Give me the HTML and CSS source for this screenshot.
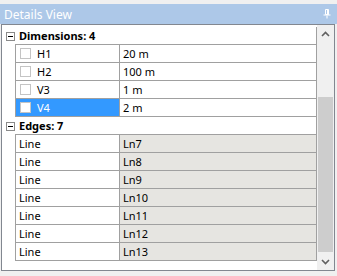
FILE: index.html
```html
<!DOCTYPE html>
<html lang="en">
<head>
<meta charset="UTF-8" />
<title>Details View</title>
<link rel="stylesheet" href="styles.css">
</head>
<body>

<div class="titlebar">
  <span>Details View</span>
  <svg class="pin" width="8" height="10" viewBox="0 0 8 10">
    <path d="M2.5 0.5h3v5h-3z" fill="none" stroke="#fff" />
    <rect x="4" y="1" width="1.5" height="4.5" fill="#fff" />
    <rect x="0.5" y="5.5" width="7" height="1" fill="#fff" />
    <rect x="3.5" y="6.5" width="1" height="3" fill="#fff" />
  </svg>
</div>

<div class="grid">
  <div class="rows">
    <div class="row cat">
      <div class="gutter"><span class="toggle"></span></div>
      <div class="label">Dimensions: 4</div>
    </div>
    <div class="row prop">
      <div class="gutter"></div>
      <div class="name"><span class="check"></span>H1</div>
      <div class="value">20 m</div>
    </div>
    <div class="row prop">
      <div class="gutter"></div>
      <div class="name"><span class="check"></span>H2</div>
      <div class="value">100 m</div>
    </div>
    <div class="row prop">
      <div class="gutter"></div>
      <div class="name"><span class="check"></span>V3</div>
      <div class="value">1 m</div>
    </div>
    <div class="row prop">
      <div class="gutter"></div>
      <div class="name selected"><span class="check"></span>V4</div>
      <div class="value">2 m</div>
    </div>

    <div class="row cat">
      <div class="gutter"><span class="toggle"></span></div>
      <div class="label">Edges: 7</div>
    </div>
    <div class="row prop">
      <div class="gutter"></div>
      <div class="name plain">Line</div>
      <div class="value readonly">Ln7</div>
    </div>
    <div class="row prop">
      <div class="gutter"></div>
      <div class="name plain">Line</div>
      <div class="value readonly">Ln8</div>
    </div>
    <div class="row prop">
      <div class="gutter"></div>
      <div class="name plain">Line</div>
      <div class="value readonly">Ln9</div>
    </div>
    <div class="row prop">
      <div class="gutter"></div>
      <div class="name plain">Line</div>
      <div class="value readonly">Ln10</div>
    </div>
    <div class="row prop">
      <div class="gutter"></div>
      <div class="name plain">Line</div>
      <div class="value readonly">Ln11</div>
    </div>
    <div class="row prop">
      <div class="gutter"></div>
      <div class="name plain">Line</div>
      <div class="value readonly">Ln12</div>
    </div>
    <div class="row prop">
      <div class="gutter"></div>
      <div class="name plain">Line</div>
      <div class="value readonly">Ln13</div>
    </div>
  </div>

  <div class="scrollbar">
    <div class="arrow">
      <svg width="9" height="6" viewBox="0 0 9 6"><path d="M1 5 L4.5 1.5 L8 5" fill="none" stroke="#606060" stroke-width="1.6" /></svg>
    </div>
    <div class="track"><div class="thumb"></div></div>
    <div class="arrow">
      <svg width="9" height="6" viewBox="0 0 9 6"><path d="M1 1 L4.5 4.5 L8 1" fill="none" stroke="#606060" stroke-width="1.6" /></svg>
    </div>
  </div>
</div>

</body>
</html>
```

FILE: styles.css
```css
body {
  margin: 0;
  background: #f0f0f0;
  font-family: "Noto Sans", "Liberation Sans", sans-serif;
  font-size: 11px;
  color: #000;
}
.titlebar {
  display: flex;
  align-items: center;
  justify-content: space-between;
  height: 20px;
  margin-top: 4px;
  padding: 0 6px 0 4px;
  background: #adc8e8;
  color: #fff;
  font-size: 12px;
}
.pin {
  display: block;
}
.grid {
  display: flex;
  height: 245px;
  margin: 0 2px 0 1px;
  border: 1px solid #828790;
  background: #fff;
}
.rows {
  width: 315px;
  padding-top: 2px;
}
.row {
  display: flex;
  height: 18px;
  line-height: 17px;
}
.gutter {
  width: 13px;
  flex: none;
  display: flex;
  align-items: center;
  justify-content: center;
}
.toggle {
  position: relative;
  width: 7px;
  height: 7px;
  border: 1px solid #8a8a8a;
  margin-left: 3px;
}
.toggle::after {
  content: "";
  position: absolute;
  left: 1px;
  top: 3px;
  width: 5px;
  height: 1px;
  background: #000;
}
.cat .label {
  flex: 1;
  padding-left: 4px;
  border-bottom: 1px solid #a0a0a0;
  border-right: 1px solid #a0a0a0;
  font-weight: bold;
}
.prop .name {
  display: flex;
  align-items: center;
  width: 99px;
  padding-left: 4px;
  border-left: 1px solid #a0a0a0;
  border-right: 1px solid #a0a0a0;
  border-bottom: 1px solid #a0a0a0;
}
.prop .name.plain {
  padding-left: 3px;
  width: 100px;
}
.prop .name.selected {
  background: #3399ff;
  color: #fff;
}
.check {
  width: 9px;
  height: 9px;
  margin-right: 6px;
  border: 1px solid #c4c4c4;
  background: #fff;
}
.prop .value {
  flex: 1;
  padding-left: 3px;
  border-right: 1px solid #a0a0a0;
  border-bottom: 1px solid #a0a0a0;
}
.prop .value.readonly {
  background: #e6e5e1;
}
.scrollbar {
  display: flex;
  flex-direction: column;
  width: 17px;
  background: #f0f0f0;
}
.arrow {
  height: 17px;
  display: flex;
  align-items: center;
  justify-content: center;
}
.track {
  flex: 1;
  padding-top: 55px;
}
.thumb {
  height: 155px;
  margin: 0 1px;
  background: #cdcdcd;
}
```
